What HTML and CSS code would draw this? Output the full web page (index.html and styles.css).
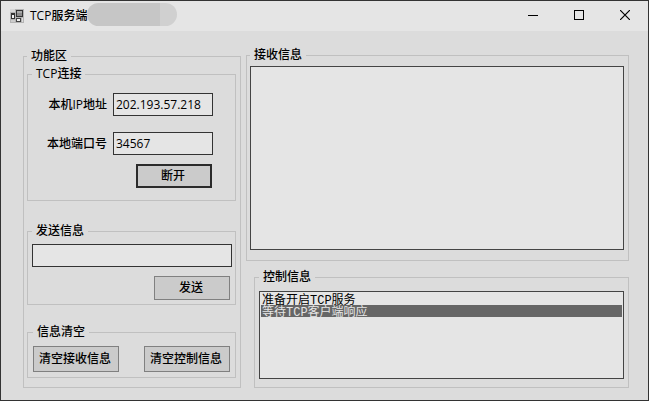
FILE: index.html
```html
<!DOCTYPE html>
<html lang="zh-CN">
<head>
<meta charset="utf-8">
<title>TCP服务端</title>
<link rel="stylesheet" href="styles.css">
</head>
<body>
<div class="window">
  <header class="titlebar">
    <svg class="app-icon" width="14" height="14" viewBox="0 0 14 14" shape-rendering="crispEdges" aria-hidden="true">
      <rect width="14" height="14" fill="#b4b4b4"/>
      <rect x="0" y="0" width="5" height="3" fill="#d8d8d8"/>
      <rect x="6" y="1" width="7" height="7" fill="#333"/>
      <rect x="7" y="2" width="5" height="5" fill="#8c8c8c"/>
      <rect x="7" y="2" width="5" height="2" fill="#aaa"/>
      <rect x="1" y="4" width="4" height="6" fill="#333"/>
      <rect x="2" y="6" width="2" height="3" fill="#f2f2f2"/>
      <rect x="6" y="9" width="5" height="4" fill="#444"/>
      <rect x="7" y="10" width="3" height="2" fill="#f2f2f2"/>
      <rect x="1" y="11" width="4" height="2" fill="#ccc"/>
      <rect x="12" y="9" width="1" height="4" fill="#ddd"/>
    </svg>
    <h1 class="title">TCP服务端</h1>
    <span class="mask"></span>
    <div class="window-controls">
      <button class="window-button" type="button" aria-label="最小化">
        <svg width="10" height="10" viewBox="0 0 10 10" shape-rendering="crispEdges"><path d="M0 5.5H10" stroke="#000"/></svg>
      </button>
      <button class="window-button" type="button" aria-label="最大化">
        <svg width="10" height="10" viewBox="0 0 10 10" shape-rendering="crispEdges"><rect x=".5" y=".5" width="9" height="9" fill="none" stroke="#000"/></svg>
      </button>
      <button class="window-button" type="button" aria-label="关闭">
        <svg width="10" height="10" viewBox="0 0 10 10"><path d="M0 0L10 10M10 0L0 10" stroke="#000" stroke-width="1.2"/></svg>
      </button>
    </div>
  </header>
  <main class="content">
    <fieldset class="group functions">
      <legend>功能区</legend>
      <fieldset class="group connection">
        <legend>TCP连接</legend>
        <div class="field">
          <label for="ip">本机IP地址</label>
          <input class="textbox" id="ip" type="text" value="202.193.57.218">
        </div>
        <div class="field">
          <label for="port">本地端口号</label>
          <input class="textbox" id="port" type="text" value="34567">
        </div>
        <button class="button default" type="button">断开</button>
      </fieldset>
      <fieldset class="group send">
        <legend>发送信息</legend>
        <input class="textbox" type="text" aria-label="发送信息">
        <button class="button" type="button">发送</button>
      </fieldset>
      <fieldset class="group clear">
        <legend>信息清空</legend>
        <div class="clear-buttons">
          <button class="button wide" type="button">清空接收信息</button>
          <button class="button wide" type="button">清空控制信息</button>
        </div>
      </fieldset>
    </fieldset>
    <div class="messages">
      <fieldset class="group received">
        <legend>接收信息</legend>
        <textarea class="received-text" aria-label="接收信息"></textarea>
      </fieldset>
      <fieldset class="group control">
        <legend>控制信息</legend>
        <select class="listbox" size="7" aria-label="控制信息">
          <option>准备开启TCP服务</option>
          <option selected>等待TCP客户端响应</option>
        </select>
      </fieldset>
    </div>
  </main>
</div>
</body>
</html>
```
FILE: styles.css
```css
* {
  box-sizing: border-box;
}

body {
  margin: 0;
  font: 500 12px/16px "Open Sans", "Noto Sans CJK SC", sans-serif;
  color: #000;
}

button,
input {
  font: inherit;
  color: inherit;
}

.window {
  display: flex;
  flex-direction: column;
  min-height: 100vh;
  border: 1px solid #333;
  background: #dcdcdc;
}

.titlebar {
  display: flex;
  align-items: center;
  height: 30px;
  padding-left: 9px;
  background: #e5e5e5;
}

.title {
  margin: 0 0 0 6px;
  font-size: 12px;
  font-weight: 500;
}

.mask {
  width: 90px;
  height: 23px;
  margin-bottom: 3px;
  border-radius: 12px;
  background: linear-gradient(90deg, #c6c6c6 73px, #d0d0d0 73px);
}

.window-controls {
  display: flex;
  align-self: stretch;
  margin-left: auto;
}

.window-button {
  display: flex;
  align-items: center;
  justify-content: center;
  width: 46px;
  padding: 0 0 2px;
  border: 0;
  background: none;
}

.content {
  display: flex;
  flex: 1;
  gap: 5px;
  padding: 16px 19px 12px 22px;
}

.group {
  min-width: 0;
  margin: 0;
  padding: 0;
  border: 1px solid #c0c0c0;
}

.group legend {
  margin: 0;
  padding: 0 4px;
}

.functions {
  flex: none;
  width: 218px;
  margin-top: 1px;
  padding: 2px 4px 9px 3px;
}

.connection {
  padding: 11px 22px 12px 4px;
}

.field {
  display: flex;
  align-items: center;
  justify-content: flex-end;
  gap: 6px;
  margin-bottom: 16px;
}

.field .textbox {
  width: 100px;
}

.field + .button {
  margin-top: -7px;
  margin-right: 1px;
}

.textbox {
  height: 23px;
  padding: 0 2px;
  border: 1px solid #333;
  background: #e5e5e5;
}

.button {
  display: block;
  width: 76px;
  height: 24px;
  margin-left: auto;
  padding: 0 2px 0 0;
  border: 1px solid #808080;
  background: #cbcbcb;
}

.button.default {
  border: 2px solid #2b2b2b;
}

.send {
  margin-top: 22px;
  padding: 5px 3px 4px 4px;
}

.send .textbox {
  display: block;
  width: 100%;
}

.send .button {
  margin-top: 9px;
  margin-right: 2px;
}

.clear {
  margin-top: 19px;
  padding: 6px 5px 5px;
}

.clear-buttons {
  display: flex;
  justify-content: space-between;
}

.button.wide {
  width: 86px;
  height: 26px;
  margin: 0;
}

.messages {
  display: flex;
  flex: 1;
  flex-direction: column;
  gap: 8px;
  min-width: 0;
}

.received {
  flex: 1;
  padding: 3px 4px 10px 3px;
}

.received-text {
  display: block;
  width: 100%;
  height: 100%;
  min-height: 184px;
  border: 1px solid #444;
  background: #e5e5e5;
  resize: none;
}

.control {
  margin-left: 8px;
  padding: 6px 4px 8px 4px;
}

.listbox {
  display: block;
  width: 100%;
  height: 88px;
  padding: 1px;
  border: 1px solid #444;
  border-radius: 0;
  background: #e5e5e5;
  color: #000;
  font: 12px/12px "Liberation Mono", "Noto Sans CJK SC", monospace;
  overflow: hidden;
}

.listbox option {
  display: flex;
  align-items: center;
  height: 12px;
  min-height: 12px;
  padding: 0 1px;
  line-height: 12px;
}

.listbox option:checked {
  background: #666 linear-gradient(#666, #666);
  color: #e5e5e5;
}
```
